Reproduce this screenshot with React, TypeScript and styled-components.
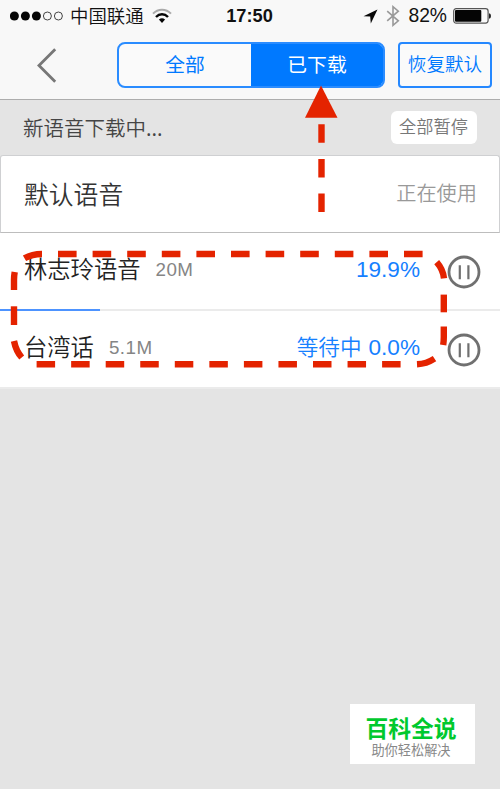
import React from "react";
import styled, { createGlobalStyle } from "styled-components";

const BLUE = "#0079ff";
const RED = "#e42300";

const GlobalStyle = createGlobalStyle`
  * { box-sizing: border-box; }
  body {
    margin: 0;
    background: #e4e4e4;
    font-family: "Liberation Sans", "Noto Sans CJK SC", sans-serif;
  }
`;

const Screen = styled.main`
  position: relative;
  display: flex;
  flex-direction: column;
  width: 500px;
  height: 789px;
  overflow: hidden;
  background: #e4e4e4;
  white-space: nowrap;
`;

const Header = styled.header`
  height: 100px;
  background: #f8f8f8;
  border-bottom: 1px solid #adadad;
`;

const StatusBar = styled.div`
  display: grid;
  grid-template-columns: 1fr auto 1fr;
  align-items: center;
  height: 32px;
  padding: 0 9px 0 10px;
  color: #111;
`;

const StatusGroup = styled.div<{ $end?: boolean }>`
  display: flex;
  align-items: center;
  justify-content: ${(p) => (p.$end ? "flex-end" : "flex-start")};
`;

const Carrier = styled.span`
  margin: -2px 8px 0 7px;
  font-family: "Noto Sans CJK SC", sans-serif;
  font-size: 18.4px;
  line-height: 30px;
  font-weight: 350;
`;

const Clock = styled.span`
  margin-left: -2px;
  font-size: 18.2px;
  font-weight: 700;
  line-height: 32px;
`;

const Percent = styled.span`
  margin: 0 6px 0 8px;
  font-size: 19.3px;
  line-height: 32px;
`;

const NavBar = styled.nav`
  display: flex;
  height: 56px;
  padding: 10px 8px 0 36px;
`;

const BackButton = styled.button`
  width: 24px;
  height: 46px;
  margin-right: 57px;
  padding: 5px 0 0;
  border: 0;
  background: none;
`;

const Tabs = styled.div`
  display: flex;
  width: 268px;
  height: 46px;
  border: 2px solid #2a8cff;
  border-radius: 8px;
  overflow: hidden;
  background: #fafafa;
`;

const Tab = styled.button<{ $active?: boolean }>`
  flex: 1;
  padding: 0 0 3px;
  border: 0;
  background: ${(p) => (p.$active ? BLUE : "transparent")};
  color: ${(p) => (p.$active ? "#fff" : BLUE)};
  box-shadow: ${(p) => (p.$active ? `1px 0 0 1px ${BLUE}` : "none")};
  font: 400 19.8px/38px "Noto Sans CJK SC", sans-serif;
`;

const ResetButton = styled.button`
  width: 94px;
  height: 46px;
  margin-left: 13px;
  padding: 0 0 4px;
  border: 2px solid #2588ff;
  border-radius: 4px;
  background: #fafafa;
  color: ${BLUE};
  font: 350 18.6px/36px "Noto Sans CJK SC", sans-serif;
`;

const SectionHeader = styled.div`
  display: flex;
  align-items: center;
  justify-content: space-between;
  height: 55px;
  padding: 0 23px 0 23px;
`;

const SectionTitle = styled.h2`
  margin: 0 0 2px;
  color: #444;
  font: 350 20.5px/30px "Noto Sans CJK SC", sans-serif;
`;

const PauseAll = styled.button`
  width: 86px;
  height: 33px;
  margin-top: -1px;
  padding: 0 1px 4px 0;
  border: 0;
  border-radius: 6px;
  background: #fff;
  color: #777;
  font: 350 17.2px/29px "Noto Sans CJK SC", sans-serif;
`;

const CurrentCard = styled.section`
  display: flex;
  align-items: center;
  justify-content: space-between;
  height: 78px;
  padding: 0 22px 2px 23px;
  border: 1px solid #cfd0d2;
  border-bottom: 1px solid #bdbdbd;
  border-radius: 3px 3px 0 0;
  background: #fff;
`;

const CurrentName = styled.span`
  color: #333;
  font: 350 24.8px/36px "Noto Sans CJK SC", sans-serif;
`;

const CurrentState = styled.span`
  color: #999;
  font: 350 20.2px/36px "Noto Sans CJK SC", sans-serif;
`;

const Downloads = styled.section`
  background: #fff;
`;

const DownloadRow = styled.div`
  display: flex;
  align-items: center;
  height: 76px;
  padding: 0 19px 0 24px;
`;

const VoiceName = styled.span`
  color: #222;
  font: 350 23.3px/34px "Noto Sans CJK SC", sans-serif;
  margin-bottom: 6px;
`;

const Size = styled.span`
  margin: 0 0 2px 15px;
  color: #858585;
  font-size: 18.8px;
  letter-spacing: 0.5px;
  line-height: 34px;
`;

const Progress = styled.span`
  margin: 0 27px 2px auto;
  color: #1580ff;
  font: 300 22.6px/34px "Liberation Sans", sans-serif;
`;

const Waiting = styled.span`
  margin-right: 7px;
  font: 350 21.6px/30px "Noto Sans CJK SC", sans-serif;
`;

const PauseButton = styled.button`
  width: 34px;
  height: 34px;
  margin-top: 2px;
  padding: 0;
  border: 0;
  background: none;
  svg { display: block; }
`;

const Track = styled.div`
  height: 2px;
  background: #ebebeb;
`;

const Fill = styled.div`
  height: 100%;
  background: #4d93ff;
`;

const Annotation = styled.svg`
  position: absolute;
  inset: 0;
  pointer-events: none;
`;

const Watermark = styled.aside`
  position: absolute;
  left: 350px;
  top: 704px;
  width: 125px;
  height: 60px;
  padding-top: 9px;
  background: #fff;
  text-align: center;
  font-family: "Noto Sans CJK SC", sans-serif;
`;

const WatermarkTitle = styled.div`
  padding-right: 3px;
  color: #00c92e;
  font-size: 22.8px;
  font-weight: 700;
  line-height: 30px;
`;

const WatermarkText = styled.div`
  padding-right: 3px;
  color: #888;
  font-size: 13.2px;
  line-height: 14px;
`;

function SignalDots() {
  return (
    <svg width="53" height="12" viewBox="0 0 53 12">
      {[4.4, 15.4, 26.4].map((x) => <circle key={x} cx={x} cy="6" r="4.5" fill="#050505" />)}
      {[37.4, 48.4].map((x) => <circle key={x} cx={x} cy="6" r="4" fill="none" stroke="#444" />)}
    </svg>
  );
}

function WifiIcon() {
  return (
    <svg width="20" height="16" viewBox="0 0 20 16" fill="none">
      <path d="M1 5.6C6 .3 14 .3 19 5.6" stroke="#aaa" strokeWidth="2" />
      <path d="M4 9C7.5 5.4 12.5 5.4 16 9" stroke="#050505" strokeWidth="2.4" />
      <path d="M6.9 11.6Q10 8.7 13.1 11.6L10 15Z" fill="#050505" />
    </svg>
  );
}

function LocationIcon() {
  return (
    <svg width="15" height="15" viewBox="0 0 15 15">
      <path d="M14.5.5 7.8 14.5 7.2 7.6.5 7.2Z" fill="#080808" />
    </svg>
  );
}

function BluetoothIcon() {
  return (
    <svg width="14" height="22" viewBox="0 0 14 22" fill="none" stroke="#999" strokeWidth="1.6">
      <path d="M1.2 6.2 12.3 15.8 7 20.3V1.7L12.3 6.2 1.2 15.8" />
    </svg>
  );
}

function BatteryIcon() {
  return (
    <svg width="38" height="16" viewBox="0 0 38 16">
      <rect x=".7" y=".7" width="34.4" height="14.4" rx="2.5" fill="#fafafa" stroke="#555" strokeWidth="1.2" />
      <rect x="2" y="2" width="26.3" height="11.8" rx="1" fill="#050505" />
      <path d="M36 5.2q2 .3 2 2.8t-2 2.8Z" fill="#222" />
    </svg>
  );
}

function PauseIcon() {
  return (
    <svg width="34" height="34" viewBox="0 0 34 34" fill="none" stroke="#707070">
      <circle cx="17" cy="17" r="15" strokeWidth="2.8" />
      <path d="M12.8 10.3V24.2M21.4 10.3V24.2" strokeWidth="2.2" />
    </svg>
  );
}

type Voice = { name: string; size: string; progress: number; waiting?: boolean };

const voices: Voice[] = [
  { name: "林志玲语音", size: "20M", progress: 19.9 },
  { name: "台湾话", size: "5.1M", progress: 0, waiting: true },
];

function VoiceItem({ voice }: { voice: Voice }) {
  return (
    <>
      <DownloadRow>
        <VoiceName>{voice.name}</VoiceName>
        <Size>{voice.size}</Size>
        <Progress>
          {voice.waiting && <Waiting>等待中</Waiting>}
          {voice.progress.toFixed(1)}%
        </Progress>
        <PauseButton aria-label="暂停"><PauseIcon /></PauseButton>
      </DownloadRow>
      <Track><Fill style={{ width: `${voice.progress}%` }} /></Track>
    </>
  );
}

export default function App() {
  return (
    <>
      <GlobalStyle />
      <Screen>
        <Header>
          <StatusBar>
            <StatusGroup><SignalDots /><Carrier>中国联通</Carrier><WifiIcon /></StatusGroup>
            <Clock>17:50</Clock>
            <StatusGroup $end>
              <LocationIcon />
              <svg width="8" height="1" />
              <BluetoothIcon />
              <Percent>82%</Percent>
              <BatteryIcon />
            </StatusGroup>
          </StatusBar>
          <NavBar>
            <BackButton aria-label="返回">
              <svg width="24" height="38" viewBox="0 0 24 38" fill="none">
                <path d="M19.2 2.2 3 18.5 19.2 34.8" stroke="#777" strokeWidth="2.8" />
              </svg>
            </BackButton>
            <Tabs>
              <Tab>全部</Tab>
              <Tab $active>已下载</Tab>
            </Tabs>
            <ResetButton>恢复默认</ResetButton>
          </NavBar>
        </Header>
        <SectionHeader>
          <SectionTitle>新语音下载中...</SectionTitle>
          <PauseAll>全部暂停</PauseAll>
        </SectionHeader>
        <CurrentCard>
          <CurrentName>默认语音</CurrentName>
          <CurrentState>正在使用</CurrentState>
        </CurrentCard>
        <Downloads>
          {voices.map((voice) => <VoiceItem key={voice.name} voice={voice} />)}
        </Downloads>
        <Annotation width="500" height="789" viewBox="0 0 500 789" fill="none" stroke={RED} strokeWidth="6.4">
          <path d="M321 85.5 337.5 117.8H305Z" fill={RED} stroke="none" />
          <path d="M321.5 124.3V212" strokeDasharray="18.5 16.1" />
          <path d="M58 254H423" strokeDasharray="18.6 16" />
          <path d="M36.6 364.3H402" strokeDasharray="18.5 16.05" />
          <path d="M24.5 258.3Q32 254 42 254" />
          <path d="M14 290V280Q14 276 14.7 272" />
          <path d="M14 306.3V325" />
          <path d="M14 341Q16 351 21.7 357.5" />
          <path d="M436.7 262.2Q443 269.5 444 278.3" />
          <path d="M443.8 294.6V312.3" />
          <path d="M443.8 326.6V337Q443.8 341 443.2 345" />
          <path d="M434.5 358.6Q426.5 363.8 417 364.3" />
        </Annotation>
        <Watermark>
          <WatermarkTitle>百科全说</WatermarkTitle>
          <WatermarkText>助你轻松解决</WatermarkText>
        </Watermark>
      </Screen>
    </>
  );
}
